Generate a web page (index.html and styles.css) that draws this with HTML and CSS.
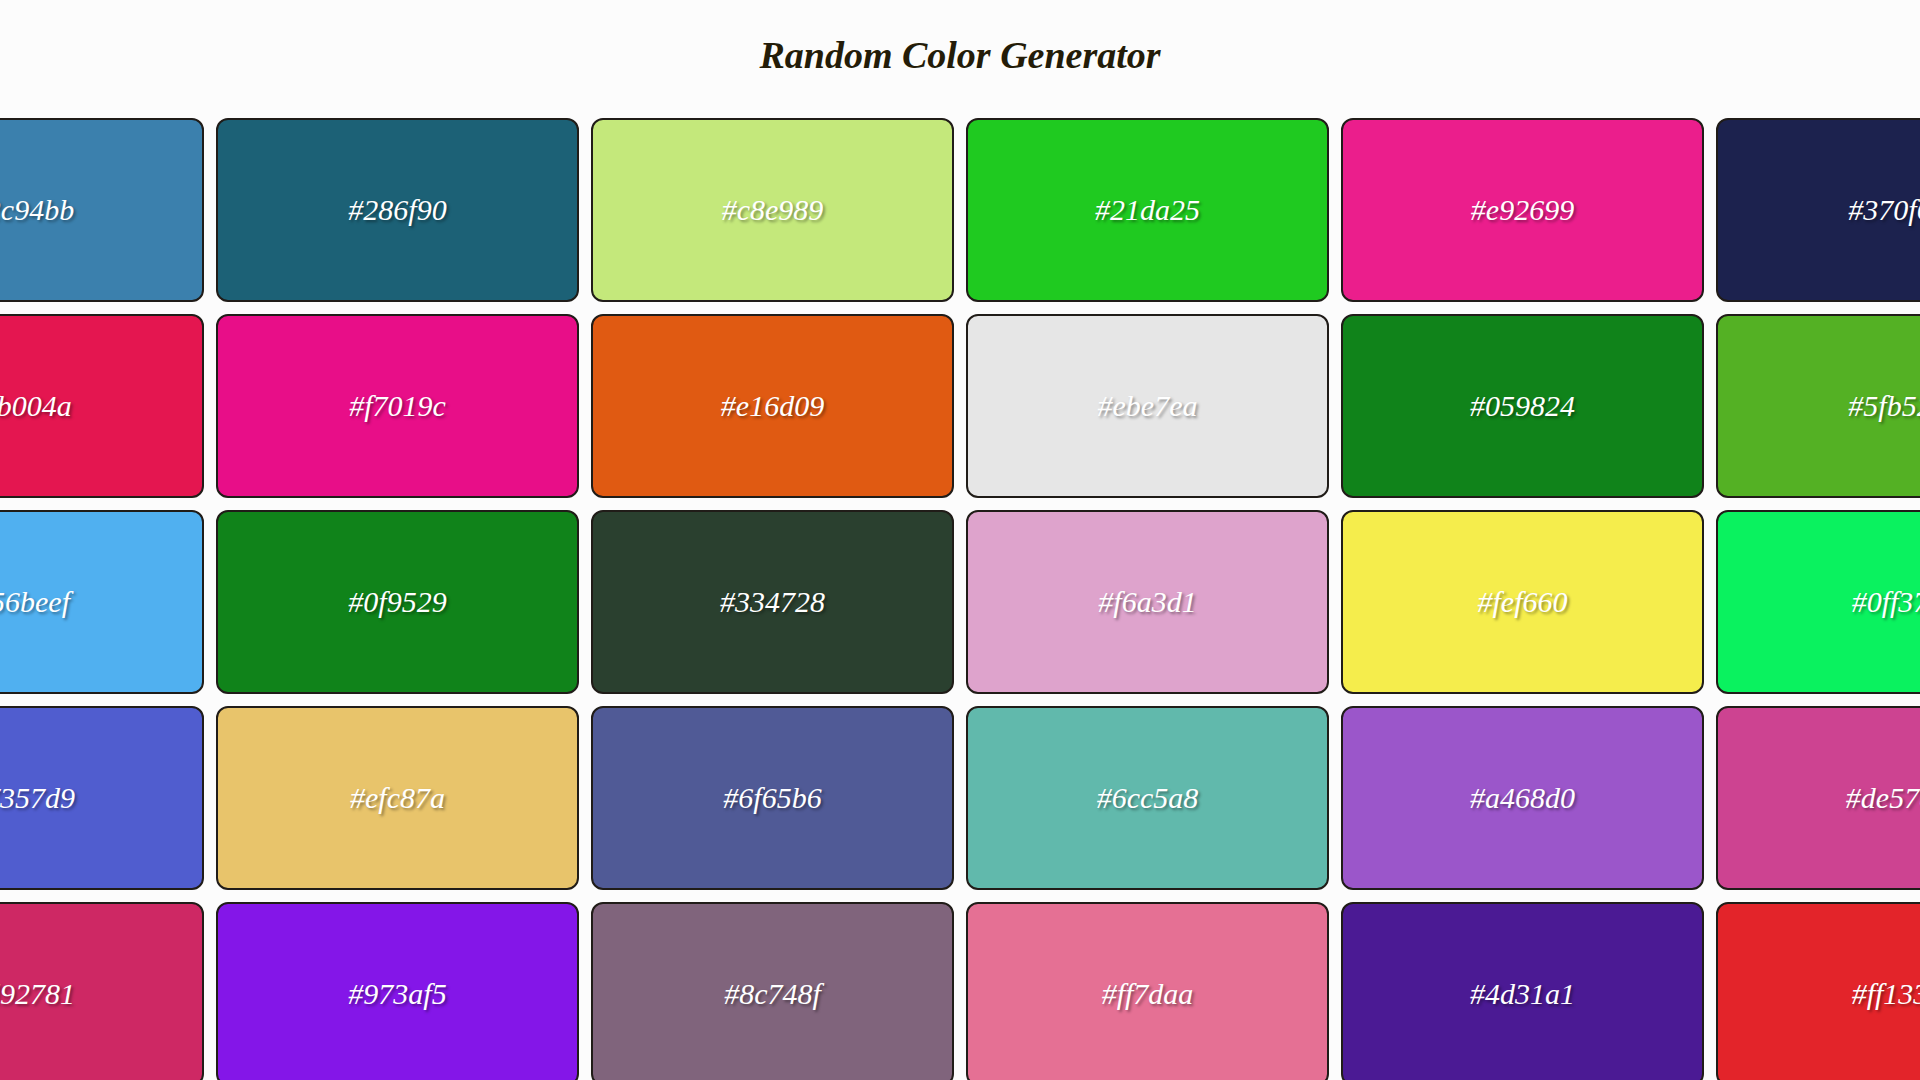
FILE: index.html
```html
<!DOCTYPE html>
<html lang="en">
<head>
<meta charset="utf-8">
<meta name="viewport" content="width=device-width, initial-scale=1">
<title>Random Color Generator</title>
<link rel="stylesheet" href="styles.css">
</head>
<body>
<h1 class="title">Random Color Generator</h1>
<main class="viewport">
<ul class="palette">
<li class="swatch" style="background-color:#3b80ad">#2c94bb</li>
<li class="swatch" style="background-color:#1c6176">#286f90</li>
<li class="swatch" style="background-color:#c4e87b">#c8e989</li>
<li class="swatch" style="background-color:#1fca20">#21da25</li>
<li class="swatch" style="background-color:#eb1e8c">#e92699</li>
<li class="swatch" style="background-color:#1c224e">#370f61</li>
<li class="swatch" style="background-color:#e41650">#fb004a</li>
<li class="swatch" style="background-color:#e80e88">#f7019c</li>
<li class="swatch" style="background-color:#e05a12">#e16d09</li>
<li class="swatch" style="background-color:#e6e6e6">#ebe7ea</li>
<li class="swatch" style="background-color:#10831a">#059824</li>
<li class="swatch" style="background-color:#54b124">#5fb521</li>
<li class="swatch" style="background-color:#50b0f0">#56beef</li>
<li class="swatch" style="background-color:#10831a">#0f9529</li>
<li class="swatch" style="background-color:#2a402f">#334728</li>
<li class="swatch" style="background-color:#dea3cc">#f6a3d1</li>
<li class="swatch" style="background-color:#f5ed4c">#fef660</li>
<li class="swatch" style="background-color:#0af25f">#0ff371</li>
<li class="swatch" style="background-color:#505dcf">#7357d9</li>
<li class="swatch" style="background-color:#e8c46b">#efc87a</li>
<li class="swatch" style="background-color:#505a96">#6f65b6</li>
<li class="swatch" style="background-color:#61b9ac">#6cc5a8</li>
<li class="swatch" style="background-color:#9b56ca">#a468d0</li>
<li class="swatch" style="background-color:#cd4391">#de57a1</li>
<li class="swatch" style="background-color:#ce2864">#d92781</li>
<li class="swatch" style="background-color:#8416e8">#973af5</li>
<li class="swatch" style="background-color:#80647c">#8c748f</li>
<li class="swatch" style="background-color:#e57094">#ff7daa</li>
<li class="swatch" style="background-color:#4b1a94">#4d31a1</li>
<li class="swatch" style="background-color:#e3242a">#ff1331</li>
</ul>
</main>
</body>
</html>
```
FILE: styles.css
```css
* {
  box-sizing: border-box;
}

body {
  margin: 0;
  overflow: hidden;
  background: #fcfcfc;
  color: #241c08;
  font-family: "Monotype Corsiva", "Z003", "Liberation Serif", serif;
  font-style: italic;
}

.title {
  margin: 0;
  padding: 31px 0 39px;
  font-size: 38px;
  line-height: 48px;
  font-weight: 700;
  text-align: center;
}

/* The six columns run past both sides of the window, centred on it. */
.viewport {
  display: flex;
  justify-content: center;
  overflow: hidden;
}

.palette {
  display: grid;
  grid-template-columns: repeat(6, 363px);
  grid-auto-rows: 184px;
  gap: 12px;
  margin: 0;
  padding: 0;
  list-style: none;
}

.swatch {
  display: flex;
  align-items: center;
  justify-content: center;
  border: 2px solid #201c18;
  border-radius: 12px;
  color: #fff;
  font-size: 30px;
  line-height: 40px;
  text-shadow: 2px 2px 3px rgba(0, 0, 0, 0.4);
}
```
